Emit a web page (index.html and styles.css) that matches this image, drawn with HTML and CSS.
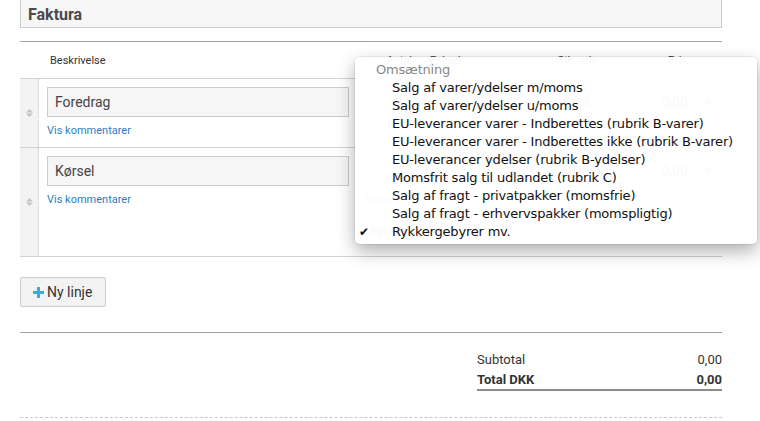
FILE: index.html
```html
<!DOCTYPE html>
<html lang="da">
<head>
    <meta charset="UTF-8">
    <title>Faktura</title>
    <link rel="stylesheet" href="styles.css">
</head>
<body>
    <div class="page">
        <div class="title">
            <h2>Faktura</h2>
        </div>

        <div class="rule"></div>

        <!-- Invoice lines -->
        <div class="lines-head">
            <span></span>
            <span class="col-desc">Beskrivelse</span>
            <span class="col-num">Antal</span>
            <span class="col-unit">Enhed</span>
            <span class="col-num">Stk. pris</span>
            <span class="col-num">Pris</span>
            <span></span>
        </div>

        <div class="line">
            <div class="handle">
                <svg width="7" height="8" viewBox="0 0 7 8"><polygon points="0,3.4 3.5,0 7,3.4"/><polygon points="0,4.6 3.5,8 7,4.6"/></svg>
            </div>
            <div class="desc">
                <input class="field" type="text" value="Foredrag">
                <a href="#" class="comments">Vis kommentarer</a>
            </div>
            <div class="cell"><input class="field num" type="text" value="1"></div>
            <div class="cell"><span class="select"></span></div>
            <div class="cell"><input class="field num" type="text" value="0,00"></div>
            <div class="cell amount">0,00</div>
            <div class="cell remove">&times;</div>
        </div>

        <div class="line">
            <div class="handle">
                <svg width="7" height="8" viewBox="0 0 7 8"><polygon points="0,3.4 3.5,0 7,3.4"/><polygon points="0,4.6 3.5,8 7,4.6"/></svg>
            </div>
            <div class="desc">
                <input class="field" type="text" value="Kørsel">
                <a href="#" class="comments">Vis kommentarer</a>
            </div>
            <div class="cell"><input class="field num" type="text" value="1"></div>
            <div class="cell"><span class="select"></span></div>
            <div class="cell"><input class="field num" type="text" value="0,00"></div>
            <div class="cell amount">0,00</div>
            <div class="cell remove">&times;</div>
            <div class="account">
                <span class="account-label">Konto</span>
                <span class="select wide">Rykkergebyrer mv.</span>
            </div>
        </div>

        <button class="add-line">
            <svg width="11" height="11" viewBox="0 0 11 11"><rect x="4" y="0" width="3" height="11"/><rect x="0" y="4" width="11" height="3"/></svg>
            Ny linje
        </button>

        <div class="rule rule-totals"></div>

        <div class="totals">
            <div class="total-row">
                <span>Subtotal</span>
                <span>0,00</span>
            </div>
            <div class="total-row grand">
                <span>Total DKK</span>
                <span>0,00</span>
            </div>
        </div>

        <div class="dashed"></div>
    </div>

    <!-- Account dropdown (open) -->
    <div class="menu">
        <div class="menu-group">Omsætning</div>
        <div class="menu-item">Salg af varer/ydelser m/moms</div>
        <div class="menu-item">Salg af varer/ydelser u/moms</div>
        <div class="menu-item">EU-leverancer varer - Indberettes (rubrik B-varer)</div>
        <div class="menu-item">EU-leverancer varer - Indberettes ikke (rubrik B-varer)</div>
        <div class="menu-item">EU-leverancer ydelser (rubrik B-ydelser)</div>
        <div class="menu-item">Momsfrit salg til udlandet (rubrik C)</div>
        <div class="menu-item">Salg af fragt - privatpakker (momsfrie)</div>
        <div class="menu-item">Salg af fragt - erhvervspakker (momspligtig)</div>
        <div class="menu-item checked">Rykkergebyrer mv.</div>
    </div>
</body>
</html>
```

FILE: styles.css
```css
/* General */
body {
    margin: 0;
    font-family: Roboto, "Liberation Sans", sans-serif;
    color: #333;
    background: #fff;
}

.page {
    width: 702px;
    margin-left: 20px;
}

.title {
    height: 28px;
    box-sizing: border-box;
    padding: 5px 7px 0;
    background: #f6f6f6;
    border: 1px solid #ccc;
    border-top: none;
}

.title h2 {
    margin: 0;
    font-size: 16px;
    line-height: 20px;
    font-weight: 700;
    color: #4a4a4a;
}

.rule {
    margin-top: 13px;
    border-top: 1px solid #a3a3a3;
}

/* Lines table */
.lines-head,
.line {
    display: grid;
    grid-template-columns: 19px 318px 63px 90px 95px 90px 27px;
}

.lines-head {
    height: 37px;
    box-sizing: border-box;
    align-items: center;
    border-bottom: 1px solid #d2d2d2;
    font-size: 11px;
    color: #333;
}

.lines-head .col-desc {
    padding-left: 11px;
}

.lines-head .col-num {
    text-align: right;
    padding-right: 8px;
}

.lines-head .col-unit {
    padding-left: 10px;
}

.line {
    border-bottom: 1px solid #d2d2d2;
}

.handle {
    grid-row: 1 / span 2;
    display: flex;
    align-items: center;
    justify-content: center;
    background: #f3f3f3;
    border-right: 1px dotted #c8c8c8;
}

.handle svg {
    fill: #c4c4c4;
}

.desc {
    grid-row: 1 / span 2;
    padding: 8px 8px 9px;
}

.field {
    display: block;
    width: 100%;
    height: 30px;
    box-sizing: border-box;
    margin: 0;
    padding: 0 7px;
    border: 1px solid #ccc;
    border-radius: 0;
    background: #f6f6f6;
    font-family: Roboto, "Liberation Sans", sans-serif;
    font-size: 14px;
    color: #444;
}

.field.num {
    text-align: right;
}

.comments {
    display: block;
    margin-top: 7px;
    font-size: 11px;
    line-height: 14px;
    color: #2f7cc4;
    text-decoration: none;
}

.cell {
    padding: 8px 8px 0;
    font-size: 14px;
}

.select {
    display: block;
    height: 30px;
    line-height: 28px;
    box-sizing: border-box;
    padding: 0 7px;
    border: 1px solid #ccc;
    background: #f6f6f6;
    font-size: 14px;
}

.amount {
    text-align: right;
    padding-right: 7px;
    line-height: 30px;
}

.remove {
    color: #e0464a;
    font-size: 16px;
    line-height: 30px;
    text-align: center;
    padding: 8px 0 0;
}

.account {
    grid-column: 3 / span 3;
    grid-row: 2;
    padding: 7px 0 14px 5px;
}

.account-label {
    display: block;
    font-size: 11px;
    line-height: 14px;
    color: #2f7cc4;
    padding-left: 3px;
}

.select.wide {
    width: 152px;
    height: 21px;
    line-height: 19px;
    margin-top: 14px;
    font-size: 12px;
}

/* Add line button */
.add-line {
    display: flex;
    align-items: center;
    gap: 3px;
    margin-top: 20px;
    height: 30px;
    padding: 0 13px 0 12px;
    background: #f3f3f3;
    border: 1px solid #ccc;
    border-radius: 2px;
    font-family: Roboto, "Liberation Sans", sans-serif;
    font-size: 14px;
    color: #333;
}

.add-line svg {
    fill: #3aaed0;
}

.rule-totals {
    margin-top: 25px;
}

/* Totals */
.totals {
    width: 245px;
    margin-left: auto;
    padding-top: 17px;
    font-size: 13px;
}

.total-row {
    display: flex;
    justify-content: space-between;
    line-height: 20px;
}

.total-row.grand {
    line-height: 19px;
    font-weight: 700;
    border-bottom: 2px solid #8c8c8c;
}

.dashed {
    margin-top: 26px;
    border-top: 1px dashed #c8c8c8;
}

/* Dropdown menu */
.menu {
    position: absolute;
    left: 355px;
    top: 57px;
    width: 402px;
    padding: 4px 0 3px;
    background: rgba(255, 255, 255, 0.965);
    border-radius: 5px;
    box-shadow: 0 7px 18px rgba(0, 0, 0, 0.32), 0 0 0 1px rgba(0, 0, 0, 0.06);
    font-family: "DejaVu Sans", sans-serif;
    font-size: 13px;
    line-height: 18px;
    letter-spacing: -0.2px;
    color: #111;
}

.menu-group {
    padding-left: 21px;
    color: #888;
}

.menu-item {
    position: relative;
    padding-left: 37px;
}

.menu-item.checked::before {
    content: "\2714";
    position: absolute;
    left: 4px;
    font-size: 12px;
}
```
